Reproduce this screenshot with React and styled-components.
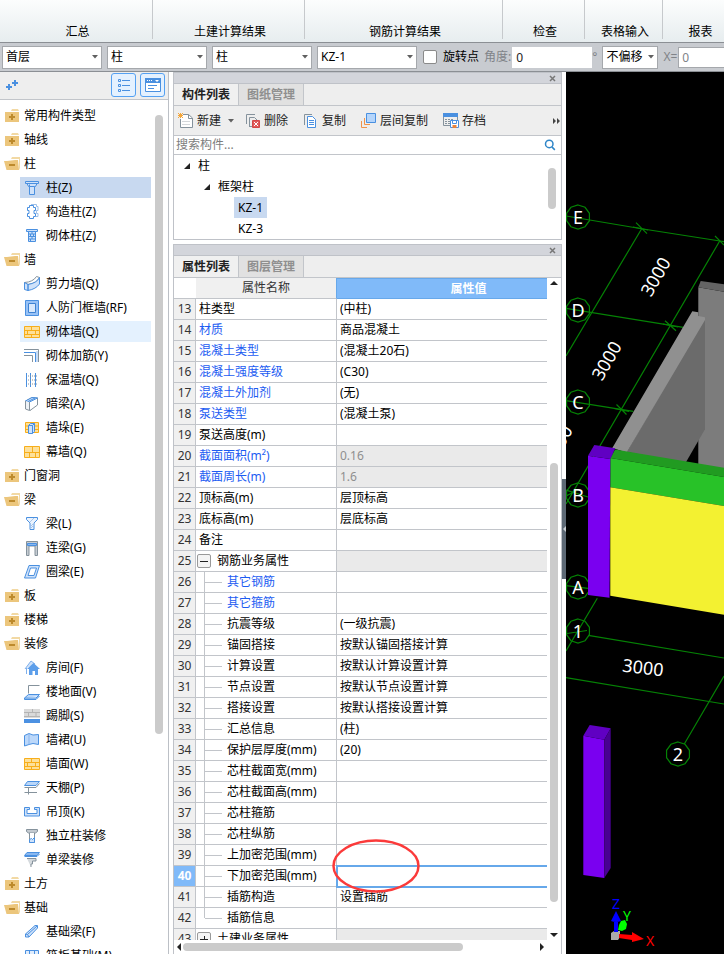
import React, { useState } from 'react';
import styled, { createGlobalStyle } from 'styled-components';

const GlobalStyle = createGlobalStyle`
  * {
    box-sizing: border-box;
  }

  body {
    margin: 0;
    background: #fff;
  }

  body, button, input, select {
    font-family: "Noto Sans", "Noto Sans CJK SC", sans-serif;
    font-size: 12px;
    line-height: 18px;
    color: #000;
  }
`;

const App = styled.div`
  display: flex;
  flex-direction: column;
  height: 100vh;
  overflow: hidden;
`;

/* ---------- ribbon ---------- */

const Ribbon = styled.header`
  display: flex;
  flex: none;
  height: 43px;
  padding-bottom: 3px;
  background: linear-gradient(#fcfdfd, #e7edef);
  border-bottom: 1px solid #8b8f94;
`;

const RibbonGroup = styled.div`
  display: flex;
  flex: none;
  align-items: flex-end;
  justify-content: center;
  width: ${props => props.$width}px;
  padding: 0 0 0 3px;
  line-height: 14px;
  white-space: nowrap;
  border-right: 1px solid #c6c9cc;
`;

/* ---------- option bar ---------- */

const OptionBar = styled.div`
  display: flex;
  flex: none;
  align-items: center;
  height: 29px;
  padding-left: 2px;
  background: #c8cbd0;
  border-bottom: 1px solid #8b8f94;
  overflow: hidden;
`;

const SelectBox = styled.span`
  display: grid;
  flex: none;
  align-items: center;
  width: ${props => props.$width}px;
  margin-right: 5px;

  > * {
    grid-area: 1 / 1;
  }

  > svg {
    justify-self: end;
    margin-right: 4px;
    pointer-events: none;
  }
`;

const Select = styled.select`
  width: 100%;
  height: 23px;
  padding: 0 3px;
  background: #fff;
  border: 1px solid #a5a8ac;
  border-radius: 0;
  appearance: none;
`;

const Check = styled.input`
  flex: none;
  width: 14px;
  height: 14px;
  margin: 0 6px 0 1px;
  background: #fff;
  border: 1px solid #8a8a8a;
  border-radius: 2px;
  appearance: none;

  &:checked {
    background: #3c8be0;
  }
`;

const BarLabel = styled.label`
  flex: none;
  margin-right: ${props => props.$gap || 0}px;
  color: ${props => (props.$muted ? '#808388' : '#000')};
`;

const BarInput = styled.input`
  flex: none;
  width: 80px;
  height: 21px;
  padding: 0 3px;
  background: #fff;
  border: 1px solid ${props => (props.$muted ? '#a5a8ac' : '#fff')};
  color: ${props => (props.$muted ? '#808388' : '#222')};
`;

/* ---------- workspace ---------- */

const Workspace = styled.main`
  display: flex;
  flex: 1;
  min-height: 0;
`;

const Navigator = styled.nav`
  display: flex;
  flex: none;
  flex-direction: column;
  width: 169px;
  margin-right: 4px;
  border-right: 1px solid #bcc0c6;
`;

const NavigatorBar = styled.div`
  display: flex;
  flex: none;
  align-items: center;
  gap: 4px;
  height: 28px;
  padding: 0 3px 2px 6px;
  background: #eee;
  border-bottom: 1px solid #c2c5ca;
`;

const PlainButton = styled.button`
  display: flex;
  align-items: center;
  padding: 0;
  background: none;
  border: 0;
`;

const AddButton = styled(PlainButton)`
  margin-right: auto;
`;

const ViewButton = styled(PlainButton)`
  justify-content: center;
  width: 25px;
  height: 24px;
  background: #e4f1ff;
  border: 1px solid #55a1f2;
  border-radius: 3px;
`;

const NavigatorBody = styled.div`
  display: flex;
  flex: 1;
  min-height: 0;
`;

const NavigatorList = styled.ul`
  display: flex;
  flex: 1;
  flex-direction: column;
  gap: 3px;
  margin: 0;
  padding: 5px 4px 0 0;
  list-style: none;
  overflow: hidden;
`;

const GroupRow = styled(PlainButton)`
  gap: 4px;
  width: 100%;
  height: 21px;
  padding-left: 4px;
  white-space: nowrap;
`;

const ItemRow = styled(GroupRow)`
  gap: 6px;
  width: 131px;
  margin-left: 20px;
  background: ${props => props.$background || 'none'};
`;

const Track = styled.div`
  flex: none;
  width: ${props => props.$width}px;
  padding-top: ${props => props.$top}px;
`;

const Thumb = styled.div`
  width: 8px;
  height: ${props => props.$length}px;
  background: #cbcbcb;
  border-radius: 4px;
`;

/* ---------- docked panels ---------- */

const Dock = styled.div`
  display: flex;
  flex: none;
  flex-direction: column;
  gap: 4px;
  width: 389px;
`;

const Panel = styled.section`
  display: flex;
  flex: ${props => (props.$fill ? '1' : 'none')};
  flex-direction: column;
  min-height: 0;
  border: 1px solid #bfc2c8;
  border-bottom-width: ${props => (props.$fill ? '0' : '1px')};
`;

const PanelTitle = styled.div`
  display: flex;
  flex: none;
  justify-content: flex-end;
  height: 11px;
  padding-right: 5px;
  background: #d3d5db;
  border-bottom: 1px solid #bfc2c8;
`;

const Tabs = styled.div`
  display: flex;
  flex: none;
  height: 22px;
  background: #eee;
  border-bottom: 1px solid #c2c5ca;
`;

const Tab = styled.button`
  padding: 0 8px;
  background: ${props => (props.$active ? '#f0f0f0' : '#e1e1e1')};
  border: 0;
  border-right: 1px solid #c2c5ca;
  color: ${props => (props.$active ? '#222' : '#8f8f8f')};
  font-weight: bold;
`;

const ToolRow = styled.div`
  display: flex;
  flex: none;
  align-items: center;
  gap: 11px;
  height: 30px;
  padding: 0 0 0 4px;
  background: #eee;
  border-bottom: 1px solid #c2c5ca;
`;

const ToolButton = styled(PlainButton)`
  gap: 3px;
  padding-right: ${props => (props.$menu ? 0 : 4)}px;
  color: #222;

  span + svg {
    margin-left: 4px;
  }
`;

const MoreButton = styled(PlainButton)`
  margin: 0 0 0 auto;
`;

const SearchRow = styled.div`
  display: flex;
  flex: none;
  align-items: center;
  height: 19px;
  padding: 0 5px 0 0;
  border-bottom: 1px solid #c2c5ca;
`;

const SearchInput = styled.input`
  flex: 1;
  height: 18px;
  padding: 0 2px;
  border: 0;

  &::placeholder {
    color: #7d7d7d;
  }
`;

const ComponentTree = styled.div`
  display: flex;
  height: 84px;
`;

const TreeRows = styled.ul`
  flex: 1;
  margin: 0;
  padding: 0;
  list-style: none;
`;

const TreeRow = styled.li`
  display: flex;
  align-items: center;
  gap: 4px;
  height: 21px;
  padding-left: ${props => 10 + props.$level * 20}px;
`;

const TreeToggle = styled.span`
  display: flex;
  width: 6px;
`;

const TreeLabel = styled.span`
  padding: 0 4px;
  line-height: 21px;
  background: ${props => (props.$selected ? '#c8d9f0' : 'none')};
`;

/* ---------- property table ---------- */

const SheetArea = styled.div`
  display: flex;
  flex: 1;
  min-height: 0;
`;

const SheetClip = styled.div`
  flex: 1;
  overflow: hidden;
`;

const Sheet = styled.table`
  width: 427px;
  table-layout: fixed;
  border-collapse: separate;
  border-spacing: 0;

  th, td {
    height: 21px;
    padding: 0 3px;
    line-height: 18px;
    text-align: left;
    font-weight: normal;
    white-space: nowrap;
    border: 0 solid #c2c5ca;
    border-bottom-width: 1px;
  }

  thead th {
    height: 20px;
    text-align: center;
  }
`;

const NameHead = styled.th`
  background: #f0f0f0;
  color: #333;

  && {
    border-right: 1px solid #67a8ea;
  }
`;

const ValueHead = styled.th`
  background: #80baf9;

  && {
    border: 1px solid #67a8ea;
    border-left: 0;
    color: #fff;
    font-weight: bold;
  }
`;

const IndexCell = styled.th`
  background: ${props => (props.$selected ? '#80baf9' : '#f0f0f0')};
  color: ${props => (props.$selected ? '#fff' : '#333')};

  && {
    padding: 0;
    border-right-width: 1px;
    text-align: center;
    font-weight: ${props => (props.$selected ? 'bold' : 'normal')};
  }
`;

const NameCell = styled.td`
  color: ${props => (props.$linked ? '#1c5cf2' : '#000')};

  && {
    padding: 0 0 0 ${props => (props.$tree ? 0 : 3)}px;
    border-right-width: 1px;
  }
`;

const ValueCell = styled.td`
  position: relative;
  z-index: ${props => (props.$selected ? 1 : 0)};
  background: ${props => (props.$locked ? '#eaeaea' : '#fff')};
  color: ${props => (props.$locked ? '#8f8f8f' : '#000')};
  outline: ${props => (props.$selected ? '2px solid #66a8ea' : 'none')};
  outline-offset: -1px;
`;

const NameLine = styled.div`
  display: flex;
  align-items: center;
  gap: ${props => props.$gap}px;
  height: 20px;
`;

const Branch = styled.span`
  display: flex;
  align-items: center;
  width: 18px;
  height: 20px;
  margin-left: 8px;

  &::before {
    content: "";
    width: 1px;
    height: ${props => (props.$last ? '10px' : '100%')};
    align-self: flex-start;
    background: #c2c5ca;
  }

  &::after {
    content: "";
    flex: 1;
    height: 1px;
    background: #c2c5ca;
  }
`;

const Expander = styled.button`
  display: flex;
  align-items: center;
  justify-content: center;
  width: 14px;
  height: 14px;
  margin-left: 1px;
  padding: 0;
  background: #f4f4f4;
  border: 1px solid #999;
  border-radius: 2px;
`;

/* hand-drawn mark lying over the edited cells */
const Highlight = styled.svg`
  position: absolute;
  top: -28px;
  left: -6px;
  pointer-events: none;
`;

const VerticalBar = styled.div`
  display: flex;
  flex: none;
  flex-direction: column;
  align-items: center;
  width: 14px;
  padding: 2px 0 3px;
`;

const HorizontalBar = styled.div`
  display: flex;
  flex: none;
  align-items: center;
  gap: 2px;
  height: 14px;
  padding: 0 16px 0 2px;

  > svg:last-child {
    margin-left: auto;
  }
`;

const WideThumb = styled(Thumb)`
  width: 280px;
  height: 8px;
`;

const TallThumb = styled(Thumb)`
  margin: auto 0 30px;
`;

const Splitter = styled.div`
  flex: none;
  width: 4px;
`;

const SplitterHandle = styled.button`
  display: flex;
  align-items: center;
  width: 4px;
  height: 100px;
  margin: 407px 0 0;
  padding: 0;
  background: #5d6975;
  border: 0;
`;

const Viewport = styled.div`
  flex: 1;
  min-width: 0;
  background: #000;
  overflow: hidden;

  svg {
    display: block;
    font-family: "Noto Sans", sans-serif;
  }
`;

/* ---------- icons ---------- */

const BLUE = '#4a90e0';
const PALE = '#cfe2fa';
const GREY = '#85929c';
const GOLD = '#f7ae1b';

const Icon = ({ children, size = 16 }) => (
  <svg width={size} height={size} viewBox="0 0 16 16" fill="none" stroke={BLUE} aria-hidden="true">
    {children}
  </svg>
);

const Caret = () => (
  <svg width="6" height="4" viewBox="0 0 6 4" aria-hidden="true">
    <path d="M0 0h6L3 3.500z" fill="#606060" />
  </svg>
);

const Arrow = ({ dir }) => {
  const paths = { up: 'M0 5h8L4 1z', down: 'M0 1h8L4 5z', left: 'M5 0v8L1 4z', right: 'M0 0v8l4-4z' };
  const flat = dir === 'up' || dir === 'down';
  return (
    <svg width={flat ? 8 : 5} height={flat ? 5 : 8} aria-hidden="true">
      <path d={paths[dir]} fill="#222" />
    </svg>
  );
};

const CloseMark = () => (
  <svg width="7" height="10" viewBox="0 0 7 10" stroke="#777" strokeWidth="1.5" aria-hidden="true">
    <path d="M1 3l5 5M6 3L1 8" />
  </svg>
);

const Bricks = () => (
  <>
    <path d="M.5 2.5h15v11H.5z" fill="#fde09a" />
    <path d="M.5 6.500h15M.5 10.500h15M7.500 2.500v4M3.500 6.500v4M11.500 6.500v4M7.500 10.500v3" />
  </>
);

const shapes = {
  closed: (
    <g stroke="none">
      <path d="M8 1h6l1 2H7z" fill="#f2d9a4" />
      <path d="M1 4h14v10H1z" fill="#ecc67c" />
      <path d="M7 6h2v2h2v2H9v2H7v-2H5V8h2z" fill="#bd8a2c" />
    </g>
  ),
  open: (
    <g stroke="none">
      <path d="M7 3l1-2h8v11l-1 2V3z" fill="#f2d9a4" />
      <path d="M0 5h3l8-1h3l1 10H2.500z" fill="#ecc67c" />
      <path d="M5 8h6v2H5z" fill="#bd8a2c" />
    </g>
  ),
  column: <path d="M1.500 1.500h13v2h-1.500l-1.500 3h-1v8h-5v-8h-1L3 3.500H1.500zM3 3.500h10M5.500 6.500h5M5.500 6.500v-2" fill={PALE} />,
  tieColumn: (
    <>
      <path d="M7 .5h5.500v2h1.500v4h-1.500v3h1.500v3h-2" stroke="#9dbfe8" />
      <path d="M5.500 1.500h4v2h2v3h-1.500v3h1.500v3h-2v2h-4v-2h-2v-3H5v-3H3.500v-3h2z" fill="#fff" />
    </>
  ),
  brickColumn: (
    <>
      <path d="M2.500 1.500h11v2h-11z" fill={PALE} />
      <path d="M4.500 3.500h7v10h-7zM4.500 6h7M4.500 8.500h7M4.500 11h7M8 3.500V6M6.500 6v2.500M9.500 6v2.500M8 8.500V11M6.500 11v2.500" fill={PALE} />
    </>
  ),
  shearWall: (
    <>
      <path d="M.5 6.500Q9 6 12.500.5l3 1Q13 7 4 8.500z" fill="#fff" stroke={GREY} />
      <path d="M.5 6.500L4 8.500v6l-3.500-1zM4 8.500Q13 7 15.500 1.500V8Q12 13 4 14.500z" fill={PALE} />
    </>
  ),
  doorFrame: (
    <>
      <path d="M1.500.5h13v15h-13z" fill="#98c2f6" />
      <path d="M4.500 3.500h7v9h-7z" fill="#d9e9fc" stroke="#3f83d3" />
    </>
  ),
  brickWall: <g stroke={GOLD}><Bricks /></g>,
  wallRebar: (
    <>
      <path d="M0 1.500h14.500V14" stroke={GREY} />
      <path d="M0 4.500h11.500V14" />
      <path d="M0 7.500h8.500V14" stroke={GREY} />
      <path d="M13 3v11" stroke="#8fb9ec" />
    </>
  ),
  insulation: (
    <>
      <path d="M2.500 1v14M6.500 1v14M11.500 1v14" />
      <path d="M4 4h9M4 8h9M4 12h9" strokeDasharray="1 1" stroke={GREY} />
    </>
  ),
  hiddenBeam: (
    <>
      <path d="M1.500 5L8 1.500l5.500.5v7L6 14.500z" fill="#fff" stroke={GREY} />
      <path d="M1.500 5L8 1.500l5.500.5-8 4z" fill={PALE} />
      <path d="M1.500 5v8l4 1.500V6" stroke={GREY} fill="#eef2f6" />
      <path d="M4 5.500l7-3.500" />
    </>
  ),
  pier: (
    <>
      <g stroke={GOLD}>
        <path d="M1.500 2.500h13v10h-13zM1 6h14M1 9.500h14" fill="#fde09a" />
      </g>
      <path d="M4.500 5.500l2-2h4v8l-2 2h-4zM8.500 13.500v-8l2-2M4.500 5.500h4" fill={PALE} />
    </>
  ),
  curtainWall: (
    <g stroke={GOLD}>
      <path d="M.5 2.500h15v11H.5zM.5 8.500h15M8.500 2.500v6M5.500 8.500v5M11.500 8.500v5" fill="#fde09a" />
    </g>
  ),
  beam: (
    <>
      <path d="M2.500 1.500h11v2L10 7v6.500H6V7L2.500 3.500z" fill="#eaf3fe" />
      <path d="M6 6l4-4M7 10l3-3M6 13l4-4" stroke="#a9c6ea" />
    </>
  ),
  linkBeam: (
    <>
      <path d="M2.500 1.500h11v14h-2.500v-9.500H5v9.500H2.500z" fill="#c6ccd2" stroke={GREY} />
      <path d="M3.500 3.500h9v2h-9z" fill="#8ab8f0" />
    </>
  ),
  ringBeam: <path d="M5 1.500h10.500l-4 12.500H.5zM6.500 4L4 11.500h6L12.500 4z" fill={PALE} fillRule="evenodd" />,
  house: (
    <>
      <path d="M1 9l6-8 4 3M2.500 8v6" fill={PALE} stroke="#7fb0ec" />
      <path d="M3 9l6.500-6 6.500 6h-2v6h-3v-4H8.500v4H5V9z" fill="#5c9eea" stroke="none" />
    </>
  ),
  floor: (
    <>
      <path d="M15.500 1.500h-11v8" stroke={GREY} />
      <path d="M4.500 10.500h11L12 14H.5zM.5 14v1.500H12l3.500-3.500" fill="#b9d6f9" />
    </>
  ),
  skirting: (
    <>
      <path d="M0 1h16v9H0z" fill="#dadada" stroke="none" />
      <path d="M0 4.500h16M0 8.500h16M8.500 1v3.500M4.500 4.500v4M12 4.500v4" stroke="#b4b4b4" />
      <path d="M0 11h16v4H0z" fill="#4c91e2" stroke="none" />
    </>
  ),
  dado: (
    <>
      <path d="M.5 3.500L5 1.500l4 1.500 5.500-.5v10L9 11.500l-4 1-4.500 1.500z" fill="#bcd8fa" />
      <path d="M5 1.500v11" stroke="#8ab5ec" />
    </>
  ),
  canopy: (
    <>
      <path d="M3.500 1.500h12L12 5.500H.5z" fill="#b9d6f9" />
      <path d="M.5 7.500H12l3.500-4M.5 12.500H13M4.500 7.500v7" stroke={GREY} />
    </>
  ),
  ceiling: <path d="M.5 3.500h5v2h-2.500v4h10v-4h-2.500v-2h5v8.500H.5z" fill={PALE} />,
  loneColumn: (
    <>
      <path d="M2.500 1.500h11v2l-2 1.500h-7L2.500 3.500z" fill="#c4cad0" stroke={GREY} />
      <path d="M5.500 5v9.500h5V5" stroke={GREY} fill="#fff" />
      <path d="M5.500 14.500v-3l2-1 1 1 2-2v5z" fill={PALE} />
    </>
  ),
  beamFinish: (
    <>
      <path d="M3 .5h12.500L13 3.500H.5z" fill="#8ab8f0" />
      <path d="M.5 4.500H13L15.500 2" />
      <path d="M3 6.500h9v2.500H8.500v3H7V15" stroke={GREY} fill="#d5dade" />
    </>
  ),
  footingBeam: <path d="M11 1.500h2.500v2.500L5 13H1.500v-3zM1.500 10l2 .5L5 13M3.500 10.500L13 2" fill={PALE} />,
  raft: <path d="M1.500 2.500h13v12h-13zM1.500 6.500h13M1.500 10.500h13M5.500 2.500v12M10.500 2.500v12" fill="#dfecfc" />,
  create: (
    <>
      <path d="M5 1.500h5.500l4 3.500v9.500h-12V6" fill="#fff" stroke={GREY} />
      <path d="M10.500 1.500V5.500h4" stroke={GREY} />
      <path d="M4 8.500h8M4 11.500h8" stroke="#d4d7da" />
      <path d="M0 0l5 5M5 0L0 5M2.500 0v5M0 2.500h5" stroke="#f4a63a" />
    </>
  ),
  remove: (
    <>
      <path d="M1.500 11V1.500H10" stroke={GREY} />
      <path d="M4.500 14V4.500h5l3 3" stroke={GREY} />
      <path d="M4.500 13.500H8" stroke={GREY} />
      <path d="M7.500 7.500h7v7h-7z" fill="#e05a5a" stroke="#d34848" />
      <path d="M9 9l4 4M13 9l-4 4" stroke="#fff" />
    </>
  ),
  copy: (
    <>
      <path d="M1.500 12V1.500H9" stroke={GREY} />
      <path d="M4.500 3.500h5l3 3v8h-8z" fill="#fff" />
      <path d="M6 7.500h5M6 9.500h5M6 11.500h5" />
    </>
  ),
  layerCopy: (
    <>
      <path d="M.5 8v6.500H6" stroke="#f0924a" />
      <path d="M3.500 5v6.500H9" stroke="#f0924a" />
      <path d="M5.500.5h9v9h-9z" fill="#b5d5fb" />
    </>
  ),
  archive: (
    <>
      <path d="M0 0h15v4H0z" fill={BLUE} stroke="none" />
      <path d="M.5 4v8.500H7M14.500 4v3" stroke={GREY} />
      <path d="M2 6.500h8M2 8.500h5M2 10.500h5" stroke={GREY} strokeDasharray="2 1" />
      <path d="M7.500 7.500h8v7h-8z" fill="#fff" />
      <path d="M9.500 7.500v3h4v-3" />
      <path d="M9.500 12h4v3h-4z" fill="#e8823a" stroke="none" />
    </>
  ),
  plus: <path d="M3 7v6M0 10h6M9 3v6M6 6h6" strokeWidth="2" />,
  list: (
    <>
      <path d="M2.500 2.500h2v2h-2zM2.500 7.500h2v2h-2zM2.500 12.500h2v2h-2z" />
      <path d="M6 3.500h8M6 8.500h8M6 13.500h8" />
    </>
  ),
  card: (
    <>
      <path d="M.5 1.500h15v13H.5z" fill="#fff" />
      <path d="M0 1h16v5H0z" fill={BLUE} stroke="none" />
      <path d="M2 3.500h5" stroke="#fff" strokeDasharray="1 1" />
      <path d="M10 3h4l-2 2z" fill="#fff" stroke="none" />
      <path d="M3 8.500h9M3 11.500h6" />
    </>
  ),
  find: (
    <g stroke="#2f86c8" strokeWidth="2">
      <circle cx="7" cy="6.500" r="5" />
      <path d="M10.500 10.500l4 4" />
    </g>
  ),
};

/* ---------- data ---------- */

const ribbonGroups = [
  ['汇总', 153],
  ['土建计算结果', 152],
  ['钢筋计算结果', 198],
  ['检查', 82],
  ['表格输入', 78],
  ['报表', 73],
];

const navigator = [
  { name: '常用构件类型' },
  { name: '轴线' },
  {
    name: '柱',
    items: [['柱(Z)', 'column'], ['构造柱(Z)', 'tieColumn'], ['砌体柱(Z)', 'brickColumn']],
  },
  {
    name: '墙',
    items: [
      ['剪力墙(Q)', 'shearWall'],
      ['人防门框墙(RF)', 'doorFrame'],
      ['砌体墙(Q)', 'brickWall'],
      ['砌体加筋(Y)', 'wallRebar'],
      ['保温墙(Q)', 'insulation'],
      ['暗梁(A)', 'hiddenBeam'],
      ['墙垛(E)', 'pier'],
      ['幕墙(Q)', 'curtainWall'],
    ],
  },
  { name: '门窗洞' },
  {
    name: '梁',
    items: [['梁(L)', 'beam'], ['连梁(G)', 'linkBeam'], ['圈梁(E)', 'ringBeam']],
  },
  { name: '板' },
  { name: '楼梯' },
  {
    name: '装修',
    items: [
      ['房间(F)', 'house'],
      ['楼地面(V)', 'floor'],
      ['踢脚(S)', 'skirting'],
      ['墙裙(U)', 'dado'],
      ['墙面(W)', 'brickWall'],
      ['天棚(P)', 'canopy'],
      ['吊顶(K)', 'ceiling'],
      ['独立柱装修', 'loneColumn'],
      ['单梁装修', 'beamFinish'],
    ],
  },
  { name: '土方' },
  {
    name: '基础',
    items: [['基础梁(F)', 'footingBeam'], ['筏板基础(M)', 'raft']],
  },
];

const itemColors = { '柱(Z)': '#c8d9f0', '砌体墙(Q)': '#e4f1fe' };

const components = [
  { name: '柱', level: 0, parent: true },
  { name: '框架柱', level: 1, parent: true },
  { name: 'KZ-1', level: 2 },
  { name: 'KZ-3', level: 2 },
];

const properties = [
  { name: '柱类型', value: '(中柱)' },
  { name: '材质', value: '商品混凝土', linked: true },
  { name: '混凝土类型', value: '(混凝土20石)', linked: true },
  { name: '混凝土强度等级', value: '(C30)', linked: true },
  { name: '混凝土外加剂', value: '(无)', linked: true },
  { name: '泵送类型', value: '(混凝土泵)', linked: true },
  { name: '泵送高度(m)' },
  { name: '截面面积(m²)', value: '0.16', linked: true, locked: true },
  { name: '截面周长(m)', value: '1.6', linked: true, locked: true },
  { name: '顶标高(m)', value: '层顶标高' },
  { name: '底标高(m)', value: '层底标高' },
  { name: '备注' },
  { name: '钢筋业务属性', group: 'open', locked: true },
  { name: '其它钢筋', child: true, linked: true },
  { name: '其它箍筋', child: true, linked: true },
  { name: '抗震等级', value: '(一级抗震)', child: true },
  { name: '锚固搭接', value: '按默认锚固搭接计算', child: true },
  { name: '计算设置', value: '按默认计算设置计算', child: true },
  { name: '节点设置', value: '按默认节点设置计算', child: true },
  { name: '搭接设置', value: '按默认搭接设置计算', child: true },
  { name: '汇总信息', value: '(柱)', child: true },
  { name: '保护层厚度(mm)', value: '(20)', child: true },
  { name: '芯柱截面宽(mm)', child: true },
  { name: '芯柱截面高(mm)', child: true },
  { name: '芯柱箍筋', child: true },
  { name: '芯柱纵筋', child: true },
  { name: '上加密范围(mm)', child: true },
  { name: '下加密范围(mm)', child: true, selected: true },
  { name: '插筋构造', value: '设置插筋', child: true },
  { name: '插筋信息', child: true, last: true },
  { name: '土建业务属性', group: 'closed', locked: true },
];

/* ---------- parts ---------- */

const Dropdown = ({ label, options, width = 100 }) => (
  <SelectBox $width={width}>
    <Select aria-label={label}>
      {options.map(option => <option key={option}>{option}</option>)}
    </Select>
    <Caret />
  </SelectBox>
);

const Options = () => (
  <OptionBar>
    <Dropdown label="楼层" options={['首层']} />
    <Dropdown label="类别" options={['柱']} />
    <Dropdown label="类型" options={['柱']} />
    <Dropdown label="构件" options={['KZ-1', 'KZ-3']} />
    <Check type="checkbox" id="rotate" />
    <BarLabel htmlFor="rotate" $gap={5}>旋转点</BarLabel>
    <BarLabel htmlFor="angle" $muted $gap={1}>角度:</BarLabel>
    <BarInput id="angle" defaultValue="0" />
    <BarLabel htmlFor="angle" $muted $gap={5}>°</BarLabel>
    <Dropdown label="偏移" options={['不偏移']} width={56} />
    <BarLabel htmlFor="offset" $muted $gap={1}>X=</BarLabel>
    <BarInput id="offset" defaultValue="0" $muted />
  </OptionBar>
);

const NavigatorPanel = () => (
  <Navigator>
    <NavigatorBar>
      <AddButton aria-label="添加"><Icon>{shapes.plus}</Icon></AddButton>
      <ViewButton aria-label="列表"><Icon>{shapes.list}</Icon></ViewButton>
      <ViewButton aria-label="卡片"><Icon>{shapes.card}</Icon></ViewButton>
    </NavigatorBar>
    <NavigatorBody>
      <NavigatorList>
        {navigator.map(({ name, items }) => (
          <React.Fragment key={name}>
            <li>
              <GroupRow><Icon>{items ? shapes.open : shapes.closed}</Icon>{name}</GroupRow>
            </li>
            {items && items.map(([label, icon]) => (
              <li key={label}>
                <ItemRow $background={itemColors[label]}><Icon>{shapes[icon]}</Icon>{label}</ItemRow>
              </li>
            ))}
          </React.Fragment>
        ))}
      </NavigatorList>
      <Track $width={13} $top={15}><Thumb $length={619} /></Track>
    </NavigatorBody>
  </Navigator>
);

const PanelHead = ({ tabs }) => (
  <>
    <PanelTitle>
      <PlainButton aria-label="关闭"><CloseMark /></PlainButton>
    </PanelTitle>
    <Tabs>
      {tabs.map((tab, i) => <Tab key={tab} $active={i === 0}>{tab}</Tab>)}
    </Tabs>
  </>
);

const ComponentPanel = () => {
  const [selected, setSelected] = useState('KZ-1')

  return (
    <Panel>
      <PanelHead tabs={['构件列表', '图纸管理']} />
      <ToolRow>
        <ToolButton $menu><Icon>{shapes.create}</Icon><span>新建</span><Caret /></ToolButton>
        <ToolButton><Icon>{shapes.remove}</Icon>删除</ToolButton>
        <ToolButton><Icon>{shapes.copy}</Icon>复制</ToolButton>
        <ToolButton><Icon>{shapes.layerCopy}</Icon>层间复制</ToolButton>
        <ToolButton><Icon>{shapes.archive}</Icon>存档</ToolButton>
        <MoreButton aria-label="更多">
          <svg width="8" height="6" fill="#444"><path d="M0 0l3 3-3 3zM4 0l3 3-3 3z" /></svg>
        </MoreButton>
      </ToolRow>
      <SearchRow>
        <SearchInput placeholder="搜索构件..." aria-label="搜索构件" />
        <Icon size={12}>{shapes.find}</Icon>
      </SearchRow>
      <ComponentTree>
        <TreeRows>
          {components.map(({ name, level, parent }) => (
            <TreeRow key={name} $level={level} onClick={() => setSelected(name)}>
              <TreeToggle>
                {parent && <svg width="6" height="6"><path d="M6 0v6H0z" fill="#222" /></svg>}
              </TreeToggle>
              <TreeLabel $selected={name === selected}>{name}</TreeLabel>
            </TreeRow>
          ))}
        </TreeRows>
        <Track $width={13} $top={13}><Thumb $length={41} /></Track>
      </ComponentTree>
    </Panel>
  );
};

const PropertyName = ({ row }) => {
  if (row.group) {
    return (
      <NameLine $gap={6}>
        <Expander aria-label={row.name}>
          <svg width="8" height="8" stroke="#222">
            <path d={row.group === 'open' ? 'M0 4.500h8' : 'M0 4.500h8M4.500 1v7'} />
          </svg>
        </Expander>
        {row.name}
      </NameLine>
    );
  }
  if (row.child) {
    return <NameLine $gap={5}><Branch $last={row.last} />{row.name}</NameLine>;
  }
  return row.name;
};

const PropertyPanel = () => (
  <Panel $fill>
    <PanelHead tabs={['属性列表', '图层管理']} />
    <SheetArea>
      <SheetClip>
        <Sheet>
          <colgroup>
            <col style={{ width: 22 }} />
            <col style={{ width: 141 }} />
            <col />
          </colgroup>
          <thead>
            <tr>
              <td />
              <NameHead>属性名称</NameHead>
              <ValueHead>属性值</ValueHead>
            </tr>
          </thead>
          <tbody>
            {properties.map((row, i) => (
              <tr key={row.name}>
                <IndexCell $selected={row.selected}>{i + 13}</IndexCell>
                <NameCell $linked={row.linked} $tree={row.child || row.group}>
                  <PropertyName row={row} />
                </NameCell>
                <ValueCell $locked={row.locked} $selected={row.selected}>
                  {row.value}
                  {row.selected && (
                    <Highlight width="90" height="56" fill="none" stroke="#fb3a3a" strokeWidth="2.500">
                      <ellipse cx="45" cy="28" rx="42.500" ry="25.500" />
                    </Highlight>
                  )}
                </ValueCell>
              </tr>
            ))}
          </tbody>
        </Sheet>
      </SheetClip>
      <VerticalBar>
        <Arrow dir="up" />
        <TallThumb $length={439} />
        <Arrow dir="down" />
      </VerticalBar>
    </SheetArea>
    <HorizontalBar>
      <Arrow dir="left" />
      <WideThumb />
      <Arrow dir="right" />
    </HorizontalBar>
  </Panel>
);

/* ---------- 3d model view ---------- */

const axes = [
  ['E', 12, 145],
  ['D', 12, 238],
  ['C', 12, 330],
  ['B', 12, 423],
  ['A', 12, 515],
  ['1', 12, 559],
  ['2', 112, 682],
];

const spans = [
  [90, 205, -60],
  [41, 289, -60],
  [-8, 373, -60],
  [77, 596, 7],
];

const Bubble = ({ x, y }) => {
  const points = Array.from({ length: 10 }, (_, i) => {
    const angle = (i * Math.PI) / 5 - Math.PI / 2
    return `${x + 12 * Math.cos(angle)},${y + 12 * Math.sin(angle)}`
  });
  return <polygon points={points.join(' ')} />;
};

const Model = () => (
  <Viewport>
    <svg width="100%" height="100%">
      <g stroke="#058205" strokeWidth="1.200" fill="none">
        <path d="M0 144L74 156.500L154 169L158 169.700M0 236.300L117.300 255.300M0 328.700L67.300 339.300" />
        <path d="M75.500 157L0 284M153.700 169L0 432M0 418L22 425M0 424L12 418M0 513.700L22 516.300" />
        <path d="M31.300 526.300L0 579M1 561.500L21 558.500M22.300 563.300L158 586M0 605.700L158 632M158 604L118.300 672" />
        <path d="M70 150.700l11 11M67 155l15 3M149 164l9 9M99 248.700l11 10M97 252l15 3M50.500 332.500l10 10M48 336.500l15 3" />
        {axes.map(([label, x, y]) => <Bubble key={label} x={x} y={y} />)}
      </g>

      <path d="M132.300 215.300L158 219.700V398L132.300 394z" fill="#7c7c7c" />
      <path d="M134.700 209L158 212.300V219.700L132.300 215.300z" fill="#646464" />
      <path d="M139 245.300V357.300L119.500 391L60.700 380z" fill="#6b6b6b" />
      <path d="M126.300 239.300L132.300 240.300V244L139 245.300V248L60.700 380.500L46.300 376z" fill="#909090" />
      <path d="M49 377.500L158 395.700V405L44.300 386z" fill="#219b21" />
      <path d="M44.300 386L158 405V434L44.300 415.300z" fill="#28c228" />
      <path d="M44.300 415.300L158 434V542.700L44.300 523.700z" fill="#f3f131" />
      <path d="M22 383.700L44.300 387L43.500 525.700L22 523z" fill="#7a00f0" />
      <path d="M28.300 373L49.300 376.300L44.300 387L22 383.700z" fill="#6000c2" />
      <path d="M17.300 663.700L38.300 667.700V806L17.300 803z" fill="#7a00f0" />
      <path d="M23.700 653L44.700 656.300L38.300 667.700L17.300 663.700z" fill="#6000c2" />
      <path d="M44.700 656.300V796L38.300 806V667.700z" fill="#480092" />

      <g fill="#fff" fontSize="18" textAnchor="middle">
        {axes.map(([label, x, y]) => <text key={label} x={x} y={y + 7}>{label}</text>)}
        {spans.map(([x, y, angle]) => (
          <text key={`${x}-${y}`} transform={`translate(${x} ${y}) rotate(${angle})`} y="6">3000</text>
        ))}
      </g>

      <path d="M45 861l3-2h6v6l-2 3h-7z" fill="#aaa" />
      <path d="M48 848h4v12h-4zM50 839l5 10q-5 2-10 0z" fill="#00f" />
      <path d="M53 853l2-4 4-1 2 4-1 5-4 2-4-1z" fill="#0f0" />
      <path d="M53 862l13 1v-3l12 7-12 3v-2l-13-2z" fill="#f00" />
      <g fontSize="14" textAnchor="middle">
        <text x="50" y="837" fill="#00f">Z</text>
        <text x="61" y="849" fill="#0f0">Y</text>
        <text x="84" y="874" fill="#f00">X</text>
      </g>
    </svg>
  </Viewport>
);

const TakeoffApp = () => (
  <App>
    <GlobalStyle />
    <Ribbon>
      {ribbonGroups.map(([name, width]) => (
        <RibbonGroup key={name} $width={width}>{name}</RibbonGroup>
      ))}
    </Ribbon>
    <Options />
    <Workspace>
      <NavigatorPanel />
      <Dock>
        <ComponentPanel />
        <PropertyPanel />
      </Dock>
      <Splitter>
        <SplitterHandle aria-label="收起">
          <svg width="4" height="6"><path d="M4 0v6L1 3z" fill="#c8cdd2" /></svg>
        </SplitterHandle>
      </Splitter>
      <Model />
    </Workspace>
  </App>
);

export default TakeoffApp;
